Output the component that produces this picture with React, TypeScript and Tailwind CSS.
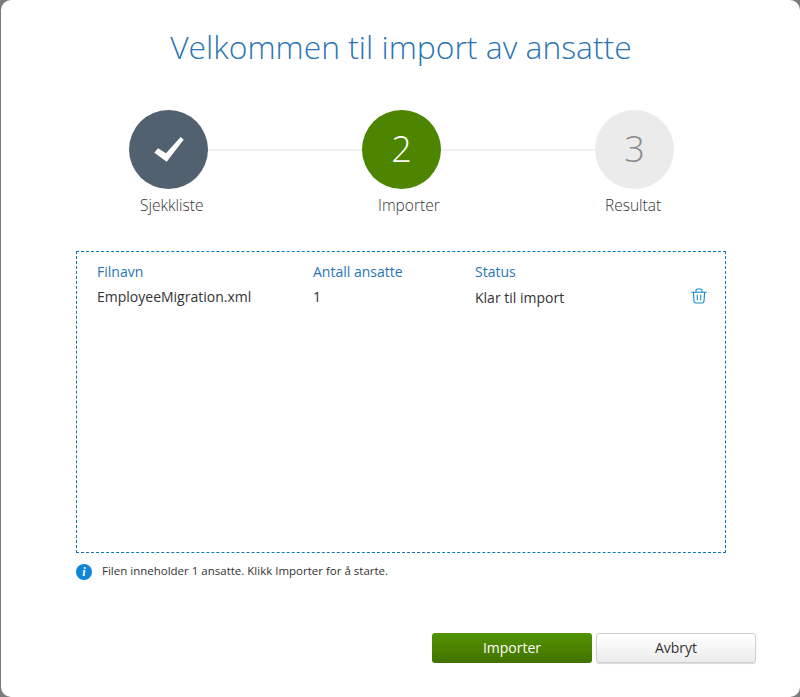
const FONT = "font-['Open_Sans','Noto_Sans',sans-serif]"

function Connector() {
  return <div className="h-[2px] w-[154px] bg-[#f1f1f1]" />
}

function Circle({ className, children }: { className: string; children: React.ReactNode }) {
  return (
    <div className={`flex h-[79px] w-[79px] shrink-0 items-center justify-center rounded-full ${className}`}>
      {children}
    </div>
  )
}

function CheckIcon() {
  return (
    <svg width="32" height="27" viewBox="0 0 96 81" fill="white">
      <path d="M4 50 L15 37 L39 52 L83 3 L92 11 L41 77 Z" />
    </svg>
  )
}

function TrashIcon() {
  return (
    <svg width="16" height="16" viewBox="0 0 16 16" fill="none" stroke="#1489d0" strokeWidth="1.1" strokeLinecap="round" className="ml-px">
      <path d="M0.6 4.2H15.4" />
      <path d="M5 4V2.4A1.4 1.4 0 0 1 6.4 1H9.6A1.4 1.4 0 0 1 11 2.4V4" />
      <path d="M2.4 4.2L3 13.2A2 2 0 0 0 5 15H11A2 2 0 0 0 13 13.2L13.6 4.2" />
      <path d="M6.3 7V11.8M9.7 7V11.8" />
    </svg>
  )
}

export default function App() {
  return (
    <div className={`h-[697px] w-[800px] overflow-hidden bg-[#7b7b7b] pl-px ${FONT}`}>
      <div className="flex h-full flex-col rounded-[10px] bg-white">
        <h1 className="mt-[25px] h-[44px] pl-px text-center text-[31.85px] leading-[44px] font-light text-[#2a75b3]">
          Velkommen til import av ansatte
        </h1>

        {/* Steg */}
        <div className="mt-[41px] flex items-center pl-[128px]">
          <Circle className="bg-[#52616f]">
            <CheckIcon />
          </Circle>
          <Connector />
          <Circle className="bg-[#4e8500] pb-[2px] text-[36px] font-light text-white">2</Circle>
          <Connector />
          <Circle className="bg-[#ebebeb] pb-[2px] text-[36px] font-light text-[#8a8a8a]">3</Circle>
        </div>
        <div className="mt-[6px] flex h-[22px] items-center pl-[139px] text-[15.5px] font-light text-[#333]">
          <span className="w-[238px]">Sjekkliste</span>
          <span className="w-[227px]">Importer</span>
          <span>Resultat</span>
        </div>

        {/* Filliste */}
        <div className="mt-[34px] ml-[75px] h-[302px] w-[650px] border border-dashed border-[#0f77b8] pt-[9px] pl-[20px] text-[14px]">
          <div className="flex h-[20px] items-center text-[#2a75b3]">
            <span className="w-[216px]">Filnavn</span>
            <span className="w-[162px]">Antall ansatte</span>
            <span>Status</span>
          </div>
          <div className="mt-[5px] flex h-[20px] items-center text-[#333]">
            <span className="w-[216px]">EmployeeMigration.xml</span>
            <span className="w-[162px]">1</span>
            <span className="mt-[2px] w-[215px]">Klar til import</span>
            <TrashIcon />
          </div>
        </div>

        <div className="mt-[9px] ml-[75px] flex h-[20px] items-center gap-[10px] text-[11.5px] text-[#333]">
          <div className="flex h-4 w-4 items-center justify-center rounded-full bg-[#0f85d6] font-['Liberation_Serif',serif] text-[12px] font-bold text-white italic">
            i
          </div>
          <span className="mb-[2px]">Filen inneholder 1 ansatte. Klikk Importer for å starte.</span>
        </div>

        <div className="mt-[51px] ml-[431px] flex gap-[4px] text-[14px]">
          <button className="h-[30px] w-[160px] rounded-[3px] bg-gradient-to-b from-[#529400] to-[#437200] pb-[2px] font-medium text-white">
            Importer
          </button>
          <button className="h-[30px] w-[160px] rounded-[3px] border border-[#cfcfcf] bg-gradient-to-b from-white to-[#ececec] pb-[2px] text-[#333] shadow-[0_1px_1px_rgba(0,0,0,0.15)]">
            Avbryt
          </button>
        </div>
      </div>
    </div>
  )
}
